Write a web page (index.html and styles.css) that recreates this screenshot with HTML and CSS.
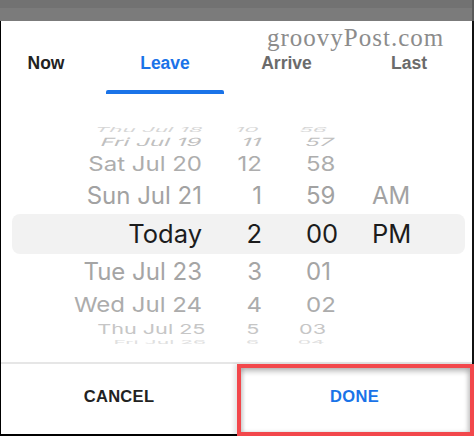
FILE: index.html
```html
<!DOCTYPE html>
<html>
<head>
<meta charset="utf-8">
<link rel="stylesheet" href="styles.css">
</head>
<body>
<div class="topbar"></div>
<div class="sheet">
  <div class="watermark">groovyPost.com</div>
  <nav class="tabs">
    <div class="tab tab-now"><span class="label">Now</span></div>
    <div class="tab tab-leave active"><span class="label">Leave</span></div>
    <div class="tab tab-arrive"><span class="label">Arrive</span></div>
    <div class="tab tab-last"><span class="label">Last</span></div>
  </nav>
  <div class="picker">
    <div class="row r1"><span class="c-date">Thu Jul 18</span><span class="c-hour">10</span><span class="c-min">56</span><span class="c-ampm"></span></div>
    <div class="row r2"><span class="c-date">Fri Jul 19</span><span class="c-hour">11</span><span class="c-min">57</span><span class="c-ampm"></span></div>
    <div class="row r3"><span class="c-date">Sat Jul 20</span><span class="c-hour">12</span><span class="c-min">58</span><span class="c-ampm"></span></div>
    <div class="row r4"><span class="c-date">Sun Jul 21</span><span class="c-hour">1</span><span class="c-min">59</span><span class="c-ampm">AM</span></div>
    <div class="row r5 selected"><span class="c-date">Today</span><span class="c-hour">2</span><span class="c-min">00</span><span class="c-ampm">PM</span></div>
    <div class="row r6"><span class="c-date">Tue Jul 23</span><span class="c-hour">3</span><span class="c-min">01</span><span class="c-ampm"></span></div>
    <div class="row r7"><span class="c-date">Wed Jul 24</span><span class="c-hour">4</span><span class="c-min">02</span><span class="c-ampm"></span></div>
    <div class="row r8"><span class="c-date">Thu Jul 25</span><span class="c-hour">5</span><span class="c-min">03</span><span class="c-ampm"></span></div>
    <div class="row r9"><span class="c-date">Fri Jul 26</span><span class="c-hour">6</span><span class="c-min">04</span><span class="c-ampm"></span></div>
  </div>
  <div class="separator"></div>
  <div class="footer">
    <div class="btn cancel">CANCEL</div>
    <div class="btn done">DONE</div>
    <div class="highlight"></div>
  </div>
</div>
</body>
</html>
```

FILE: styles.css
```css
html, body {
  margin: 0;
  padding: 0;
  background: #ffffff;
}
body {
  width: 474px;
  height: 436px;
  overflow: hidden;
  font-family: "Liberation Sans", Arial, sans-serif;
}
.topbar {
  height: 21px;
  background: linear-gradient(#727272 0, #727272 8px, #7b7b7b 8px, #7b7b7b 100%);
  box-shadow: inset -2px 0 0 #5a5a5a;
}
.sheet {
  position: relative;
  height: 413px;
  background: #ffffff;
  border-left: 1px solid #000;
  border-right: 2px solid #111;
  border-bottom: 2px solid #000;
  display: flex;
  flex-direction: column;
}
.watermark {
  position: absolute;
  left: 266px;
  top: 4px;
  font-family: "Liberation Serif", "Times New Roman", serif;
  font-size: 25px;
  line-height: 25px;
  letter-spacing: 1px;
  color: #8c8c8c;
}

/* Tabs */
.tabs {
  display: flex;
  height: 73px;
}
.tab {
  display: flex;
  flex-direction: column;
  align-items: center;
  font-weight: bold;
  font-size: 17.5px;
  color: #6b6b6b;
}
.tab .label {
  padding-top: 32px;
  line-height: 20px;
}
.tab::after {
  content: "";
  display: block;
  margin-top: 17px;
  height: 4px;
  width: 100%;
  border-radius: 2px 2px 0 0;
  background: transparent;
}
.tab-now { width: 90px; padding-right: 15px; color: #222; }
.tab-leave { width: 118px; }
.tab-arrive { width: 125px; }
.tab-last { width: 120px; }
.tab.active { color: #1a73e8; }
.tab.active::after { background: #1a73e8; }

/* Picker */
.picker {
  height: 268px;
  box-sizing: border-box;
  padding: 30px 7px 19px 11px;
  display: flex;
  flex-direction: column;
  font-family: Inter, "Liberation Sans", sans-serif;
}
.row {
  display: grid;
  grid-template-columns: 190px 60px 110px 1fr;
  align-items: center;
  font-size: 24px;
  line-height: 1;
  white-space: nowrap;
  color: #a3a3a3;
}
.c-date, .c-hour { text-align: right; }
.c-min { padding-left: 44px; }
.r1 { height: 7px; color: #d6d6d6; transform: scale(0.93, 0.28) skewX(-12deg); transform-origin: 225px 50%; }
.r2 { height: 20px; color: #c0c0c0; transform: scaleY(0.47) skewX(-12deg); }
.r3 { height: 26px; color: #adadad; transform: scaleY(0.82); }
.r4 { height: 37px; color: #a2a2a2; }
.r5 { height: 40px; color: #1c1c1c; font-size: 25.5px; background: #f2f2f2; border-radius: 8px; }
.r6 { height: 36px; color: #a5a5a5; }
.r7 { height: 29px; color: #acacac; transform: scaleY(0.86); }
.r8 { height: 18px; color: #c6c6c6; transform: scale(0.9, 0.57); transform-origin: 225px 50%; }
.r9 { height: 6px; color: #e0e0e0; transform: scale(0.88, 0.22); transform-origin: 225px 50%; }

.separator {
  height: 2px;
  background: #e6e6e6;
}

/* Footer */
.footer {
  position: relative;
  height: 70px;
  display: grid;
  grid-template-columns: 236px 1fr;
}
.btn {
  padding-top: 22px;
  text-align: center;
  font-weight: bold;
  font-size: 16.5px;
  line-height: 20px;
  letter-spacing: 0.3px;
  color: #222;
}
.btn.done { color: #1a73e8; }
.highlight {
  position: absolute;
  left: 236px;
  right: -2px;
  top: 0;
  bottom: -2px;
  border: 4px solid #f2474b;
  box-shadow: inset 0 4px 5px rgba(0,0,0,0.22), inset -3px 0 4px rgba(0,0,0,0.12), inset 3px 0 3px rgba(0,0,0,0.08), -3px 0 4px rgba(0,0,0,0.1);
}
```
